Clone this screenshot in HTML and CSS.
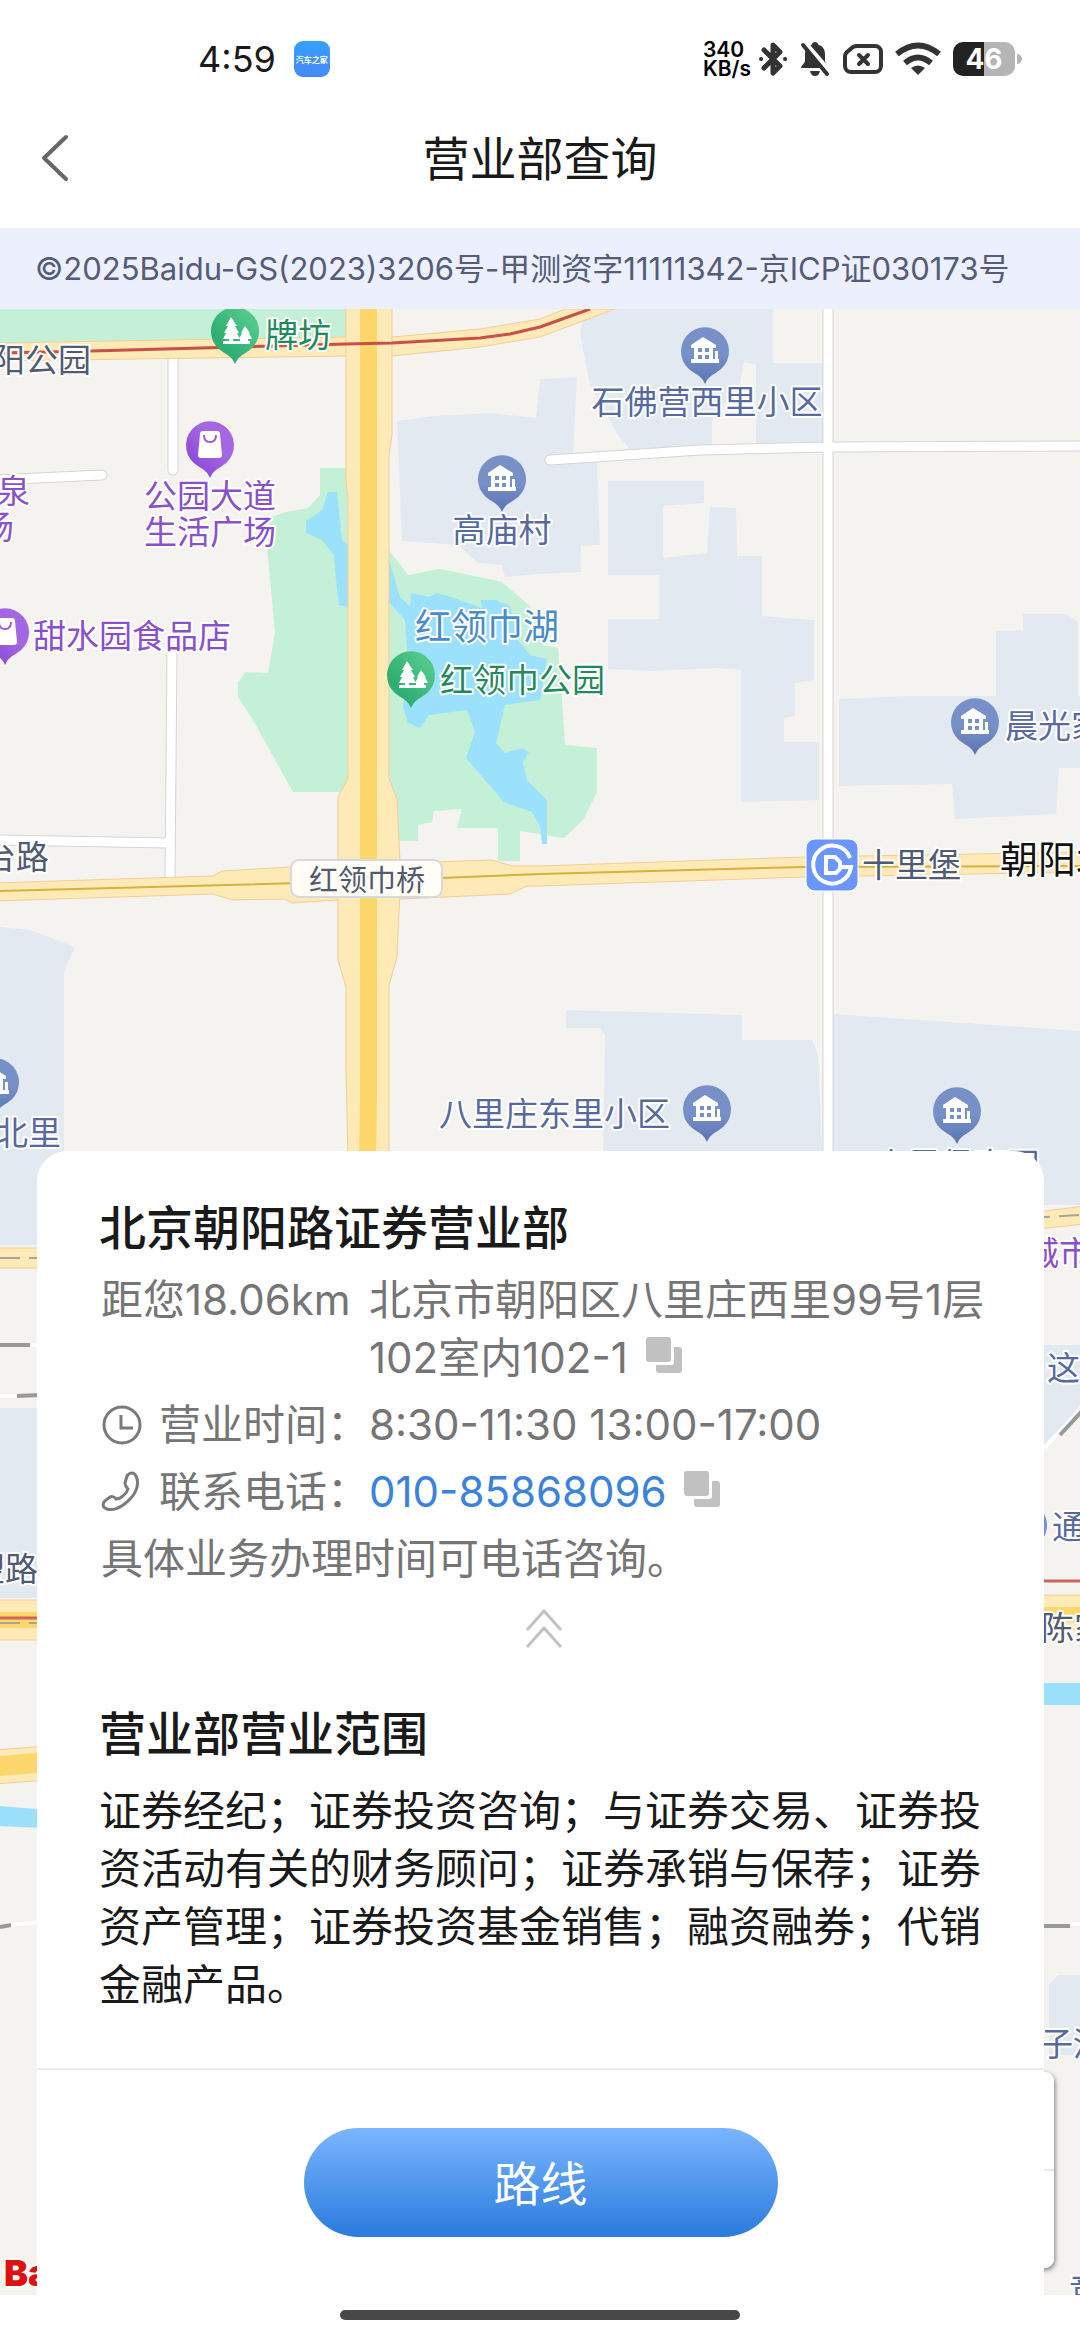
FILE: index.html
```html
<!DOCTYPE html>
<html lang="zh-CN">
<head>
  <meta charset="UTF-8">
  <meta name="viewport" content="width=device-width, initial-scale=1.0">
  <title>营业部查询</title>
  <link rel="stylesheet" href="styles.css">
</head>

<body>

  <div class="status-bar">
    <span class="time">4:59</span>
    <span class="app-icon">汽车之家</span>
    <div class="status-icons">
      <span class="speed">340<br>KB/s</span>
      <svg width="28" height="36" viewBox="0 0 28 36" fill="none" stroke="#333" stroke-width="5" stroke-linecap="round" stroke-linejoin="round">
        <path d="M5 9 L21 25 L14 32 V4 L21 11 L5 27"/>
        <path d="M2 18h.1M26 18h.1" stroke-width="4"/>
      </svg>
      <svg width="32" height="36" viewBox="0 0 32 36">
        <path d="M16 1c2 0 3 1 3 2.500c5 1.500 7 5 7 10v6c0 3 3 5 3 7.500H2c0-2.500 4-4.500 4-7.500v-6c0-5 2-8.500 7-10c0-1.500 1-2.500 3-2.500zM11 30h10q-1 5-5 5t-5-5z" fill="#333"/>
        <path d="M6 2 L31 31" stroke="#fff" stroke-width="5"/>
        <path d="M4 4 L28 33" stroke="#333" stroke-width="4" stroke-linecap="round"/>
      </svg>
      <svg width="40" height="32" viewBox="0 0 40 32" fill="none" stroke="#333" stroke-width="4">
        <path d="M14 3h18a6 6 0 0 1 6 6v14a6 6 0 0 1-6 6H8a6 6 0 0 1-6-6V13q0-2 2-4l6-5q2-1 4-1z"/>
        <path d="M16 12l9 9M25 12l-9 9" stroke-linecap="round"/>
      </svg>
      <svg width="46" height="34" viewBox="0 0 46 34" fill="none" stroke="#333" stroke-width="6">
        <path d="M2 12 Q23 -5 44 12"/>
        <path d="M10 21 Q23 10 36 21"/>
        <path d="M23 33l-7-7q7-5 14 0z" fill="#333" stroke="none"/>
      </svg>
      <span class="battery"><b>46</b></span>
    </div>
  </div>

  <header class="nav">
    <button class="back" aria-label="返回">
      <svg width="30" height="50" viewBox="0 0 30 50" fill="none" stroke="#666" stroke-width="4" stroke-linecap="round" stroke-linejoin="round"><path d="M26 4 L4 25 L26 46"/></svg>
    </button>
    <h1>营业部查询</h1>
  </header>

  <p class="notice">©2025Baidu-GS(2023)3206号-甲测资字11111342-京ICP证030173号</p>

  <main class="stage">
    <svg class="map" viewBox="0 309 1080 1986">
      <defs>
        <linearGradient id="g-blue" x2="0" y2="1"><stop offset="0.500" stop-color="#7890c8"/><stop offset="1" stop-color="#5b74b3"/></linearGradient>
        <linearGradient id="g-green" x1="1" x2="0" y2="1"><stop offset="0.200" stop-color="#50c88a"/><stop offset="0.700" stop-color="#2fae73"/></linearGradient>
        <linearGradient id="g-purple" x1="1" x2="0" y2="1"><stop offset="0.400" stop-color="#a467e2"/><stop offset="0.800" stop-color="#8c4bd8"/></linearGradient>
        <path id="drop" d="M0 33 C-3 26 -6 25 -12 21 A24 24 0 1 1 12 21 C6 25 3 26 0 33z"/>
        <g id="pin-home">
          <use href="#drop" fill="url(#g-blue)"/>
          <path d="M-2 -14 L11 -6 V-3 H8 V8 H10 V0 H13 V8 H14 V12 H-14 V8 H-11 V-3 H-14 V-6z" fill="#fff"/>
          <path d="M-7 -3h4v4h-4zM0 -3h4v4h-4zM-7 4h4v4h-4zM0 4h4v4h-4z" fill="#7890c8"/>
        </g>
        <g id="pin-park">
          <use href="#drop" fill="url(#g-green)"/>
          <path d="M-4 -14l6 9h-2l4 7h-2l3 6h-7v2h7v-2h-1l3-6h-1l4-7l5 7h-1l3 6h-4v2h2v3H-12v-3h6v-2h-6l3-6h-2l4-7h-2z" fill="#fff"/>
        </g>
        <g id="pin-shop">
          <use href="#drop" fill="url(#g-purple)"/>
          <path d="M-7 -14H7q3 0 3 3l2 21q0 3-3 3H-9q-3 0-3-3l2-21q0-3 3-3z" fill="#fff"/>
          <path d="M-6 -10q0 7 6 7t6-7" fill="none" stroke="#9a5cde" stroke-width="2"/>
        </g>
      </defs>

      <rect y="309" width="1080" height="1986" fill="#f4f3f0"/>

      <!-- residential blocks -->
      <g fill="#e3e9f1">
        <path d="M397 421L435 416L490 413L536 418L540 379L577 377L573 455L597 462L600 545L581 546V572L540 574L505 577L502 565L478 563L458 545L402 541z"/>
        <path d="M580 330L588 309H773V363H823V443H756V365L744 362L740 383L712 420V445L630 449L618 435L590 385L583 350z"/>
        <path d="M608 481H704V503L663 506V558L707 553L710 507L736 508L737 556H762V616L814 620V680L795 683V716L784 718V742H819V800L741 802V670L720 668L650 671L608 669V619H659V575H608z"/>
        <path d="M839 699L905 696H996V631L1023 630V614H1067L1078 622V696H1080V768H1059L1056 814L955 819L952 784L839 786z"/>
        <path d="M566 1010L742 1015V1040H812L818 1055L823 1170H603L605 1035L600 1028H566z"/>
        <path d="M833 1014L1080 1031V1205H833z"/>
        <path d="M0 927L30 930L75 947L64 972V1245H0z"/>
        <path d="M0 1408H60V1598H0z"/>
        <path d="M1030 1345H1080V1405L1044 1450H1030z"/>
        <path d="M1058 1975H1080V2055H1049V1984z"/>
      </g>

      <!-- parks and water -->
      <g fill="#c3f0d7">
        <path d="M0 309H346V341L0 347z"/>
        <path d="M320 468H348V792H293L253 720L238 697V682L246 672L268 673L275 633L267 547L269 518L286 512L308 508L320 495z"/>
        <path d="M389 550L408 575L440 569L484 578L502 582L530 606L543 645L558 648L562 700L565 745L597 748V792L583 820L564 838L520 831V861H498V828H457L462 809L434 811L432 822L418 825V841H389z"/>
      </g>
      <g fill="#9ce1fb">
        <path d="M328 492H337L342 540L348 545V607L339 605L336 580L334 555L322 540L306 533V521L322 510z"/>
        <path d="M389 560L400 597L410 606L411 593L429 597L436 593L451 597L482 608L481 600H496L510 606L518 640L530 655L547 659L540 700L505 705L496 743L505 753L522 748L529 752L523 762L527 780L547 800V844H542L540 826L532 812L504 802L466 758L475 732L467 710L429 715L420 728L408 723L403 707L408 665L405 620L389 602z"/>
        <path d="M0 1806L60 1811V1829L0 1826z"/>
        <path d="M1030 1683H1080V1705H1030z"/>
      </g>

      <!-- side streets -->
      <g fill="none" stroke="#d5d5d5" stroke-width="11" stroke-linecap="round">
        <path d="M173 355V470M172 650L170 880M-6 480L102 475M-6 840L170 843M828 300V1160M550 460L700 450L828 447L1090 446"/>
      </g>
      <g fill="none" stroke="#fff" stroke-width="9" stroke-linecap="round">
        <path d="M173 355V470M172 650L170 880M-6 480L102 475M-6 840L170 843M828 300V1160M550 460L700 450L828 447L1090 446"/>
      </g>

      <!-- main roads -->
      <g fill="#feeab7" stroke="#f5cd98">
        <path d="M-5 343L346 337H392L480 329L540 319L565 309H615L540 337L480 347L392 356L346 356L-5 361z"/>
        <path d="M-5 883L213 876L222 871L290 867L492 860L512 866H540L804 857L1085 852V872L804 877L540 886H527L510 894L402 899L337 900L292 903L285 899L232 900L213 894L-5 901z"/>
        <path d="M346 300H392V435L389 455V778L397 800L400 862V890L397 957L389 985V1160H348L346 1070V987L338 960V797L348 778V500L346 480z"/>
        <path d="M-5 1248H60V1268H-5z"/>
        <path d="M1020 1214L1085 1206V1224L1020 1231z"/>
        <path d="M-5 1600H60V1640H-5z"/>
        <path d="M-5 1750L60 1745V1779L-5 1784z"/>
        <path d="M1030 1595H1085V1630H1030z"/>
      </g>
      <path d="M339 868H399V896H339z" fill="#feeab7"/>
      <g fill="#fdd76b">
        <path d="M360 309H377V1100L376 1160H359L360 1100z"/>
        <path d="M0 1756L60 1751V1771L0 1776zM0 1612H60V1628H0zM1030 1607H1080V1622H1030z"/>
      </g>
      <g fill="none" stroke-width="2">
        <path d="M0 353L91 351L346 344L392 343L480 338L510 334L540 327L590 309" stroke="#c8504a" stroke-width="3"/>
        <path d="M0 891L340 882L540 874L804 867L1080 866" stroke="#d6b040"/>
        <path d="M0 1618H60M1030 1581H1080" stroke="#d0645a" stroke-width="3"/>
        <path d="M0 1258H60M0 1623H60M1030 1218L1080 1215" stroke="#aaa39a" stroke-dasharray="20 9"/>
        <path d="M1044 1448L1082 1408" stroke="#fff" stroke-width="4"/>
      </g>
      <!-- railways -->
      <g fill="none" stroke="#999" stroke-width="4">
        <path d="M0 1345H30M17 1396L40 1395M0 1927L11 1925M1044 1926H1070M1060 1435L1082 1411"/>
        <path d="M30 1345H40M0 1396H17M11 1925L40 1922M1070 1924H1080" stroke="#fff"/>
      </g>

      <!-- pins -->
      <use href="#pin-park" x="235" y="331"/>
      <use href="#pin-shop" x="210" y="445"/>
      <use href="#pin-home" x="705" y="351"/>
      <use href="#pin-home" x="502" y="479"/>
      <use href="#pin-shop" x="5" y="632"/>
      <use href="#pin-park" x="411" y="675"/>
      <use href="#pin-home" x="975" y="722"/>
      <use href="#pin-home" x="-5" y="1082"/>
      <use href="#pin-home" x="707" y="1109"/>
      <use href="#pin-home" x="957" y="1111"/>
      <use href="#pin-home" x="1023" y="1525"/>

      <!-- metro station -->
      <rect x="806" y="839" width="52" height="52" rx="9" fill="#6b96ff" stroke="#fff"/>
      <path d="M850 858A19 19 0 1 0 851 867H840" fill="none" stroke="#fff" stroke-width="4"/>
      <path d="M826 857H835L840 862V869L836 873H826z" fill="none" stroke="#fff" stroke-width="4"/>

      <!-- bridge label -->
      <rect x="291" y="860" width="151" height="37" rx="8" fill="#fffdf6" stroke="#d5d9de" stroke-width="2"/>
      <text class="bridge" x="367" y="891">红领巾桥</text>

      <g class="label road">
        <text x="91" y="372" text-anchor="end">阳公园</text>
        <text x="49" y="869" text-anchor="end">台路</text>
        <text x="862" y="877">十里堡</text>
        <text x="38" y="1581" text-anchor="end">望路</text>
        <text x="1041" y="1640">陈家</text>
      </g>
      <g class="label park">
        <text x="265" y="347">牌坊</text>
        <text x="440" y="692">红领巾公园</text>
      </g>
      <g class="label shop">
        <text x="210" y="508" text-anchor="middle">公园大道</text>
        <text x="210" y="544" text-anchor="middle">生活广场</text>
        <text x="30" y="503" text-anchor="end">泉</text>
        <text x="14" y="539" text-anchor="end">场</text>
        <text x="33" y="648">甜水园食品店</text>
        <text x="1026" y="1265">城市</text>
      </g>
      <g class="label home">
        <text x="707" y="414" text-anchor="middle">石佛营西里小区</text>
        <text x="502" y="542" text-anchor="middle">高庙村</text>
        <text x="1005" y="738">晨光家</text>
        <text x="439" y="1126">八里庄东里小区</text>
        <text x="61" y="1145" text-anchor="end">北里</text>
        <text x="957" y="1177" text-anchor="middle">十里堡南园</text>
        <text x="1047" y="1380">这</text>
        <text x="1052" y="1539">通</text>
        <text x="1040" y="2056">子河</text>
        <text x="1069" y="2302">竞</text>
      </g>
      <text class="label lake" x="415" y="640">红领巾湖</text>
      <text class="label district" x="1000" y="873">朝阳北</text>
      <text class="label baidu" x="4" y="2286">Ba</text>
    </svg>

    <div class="zoom-control"></div>

    <section class="card">
      <div class="card-body">
        <h2>北京朝阳路证券营业部</h2>
        <div class="details">
          <div class="row">
            <span>距您18.06km</span>
            <span>北京市朝阳区八里庄西里99号1层102室内102-1
              <button class="copy" aria-label="复制地址"><svg width="36" height="36" viewBox="0 0 36 36" fill="#c1c1c1"><rect width="25" height="25" rx="3"/><path d="M28 10h5a3 3 0 0 1 3 3v20a3 3 0 0 1-3 3H13a3 3 0 0 1-3-3v-5h15a3 3 0 0 0 3-3z"/></svg></button>
            </span>
          </div>
          <div class="row">
            <span class="term">
              <svg width="42" height="42" viewBox="0 0 42 42" fill="none" stroke="#7a7a7a" stroke-width="3"><circle cx="21" cy="21" r="18"/><path d="M20 11V24H32"/></svg>
              营业时间：
            </span>
            <span>8:30-11:30 13:00-17:00</span>
          </div>
          <div class="row">
            <span class="term">
              <svg width="42" height="42" viewBox="0 0 42 42" fill="none" stroke="#7a7a7a" stroke-width="3"><path d="M26 5C29 1 33 1 35 5C39 13 35 23 27 30C20 37 10 41 4 37C1 35 2 31 5 29L9 26C11 25 14 26 15 28C20 28 26 22 27 18C25 16 24 14 24 12z"/></svg>
              联系电话：
            </span>
            <span><a href="tel:010-85868096">010-85868096</a>
              <button class="copy" aria-label="复制电话"><svg width="36" height="36" viewBox="0 0 36 36" fill="#c1c1c1"><rect width="25" height="25" rx="3"/><path d="M28 10h5a3 3 0 0 1 3 3v20a3 3 0 0 1-3 3H13a3 3 0 0 1-3-3v-5h15a3 3 0 0 0 3-3z"/></svg></button>
            </span>
          </div>
          <p>具体业务办理时间可电话咨询。</p>
        </div>
        <button class="fold" aria-label="收起">
          <svg width="38" height="42" viewBox="0 0 38 42" fill="none" stroke="#c2c2c2" stroke-width="3"><path d="M2 22L19 3L36 22M2 39L19 20L36 39"/></svg>
        </button>
        <h2>营业部营业范围</h2>
        <p class="scope">证券经纪；证券投资咨询；与证券交易、证券投资活动有关的财务顾问；证券承销与保荐；证券资产管理；证券投资基金销售；融资融券；代销金融产品。</p>
      </div>
      <div class="card-foot">
        <button class="route">路线</button>
      </div>
    </section>
  </main>

  <div class="home-bar"></div>

</body>
</html>
```

FILE: styles.css
```css
* {
  box-sizing: border-box;
}

body {
  margin: 0;
  background: #fff;
  color: #1a1a1a;
  font-family: Inter, "Noto Sans CJK SC", sans-serif;
}

h1, h2, p {
  margin: 0;
}

button {
  padding: 0;
  border: 0;
  background: none;
  font-family: inherit;
  cursor: pointer;
}

svg {
  display: block;
}

/* status bar */
.status-bar {
  display: flex;
  align-items: center;
  height: 88px;
  padding: 30px 58px 0 198px;
}

.time {
  font-size: 36px;
}

.app-icon {
  display: flex;
  align-items: center;
  justify-content: center;
  width: 36px;
  height: 36px;
  margin-left: 18px;
  border-radius: 9px;
  background: linear-gradient(#35a0fb, #4687fa);
  color: #fff;
  font-size: 8px;
  font-weight: 700;
}

.status-icons {
  display: flex;
  align-items: center;
  gap: 12px;
  margin-left: auto;
}

.speed {
  margin-right: -4px;
  color: #000;
  font-size: 21px;
  font-weight: 600;
  line-height: 19px;
}

.battery {
  position: relative;
  width: 62px;
  height: 34px;
  margin-right: 7px;
  border-radius: 10px;
  background: linear-gradient(90deg, #222 50%, #b5b5b5 50%);
  color: #fff;
  font-size: 28px;
  line-height: 34px;
  text-align: center;
}

.battery::after {
  content: "";
  position: absolute;
  top: 12px;
  left: 64px;
  width: 5px;
  height: 10px;
  border-radius: 0 5px 5px 0;
  background: #b5b5b5;
}

/* header */
.nav {
  display: grid;
  grid-template-columns: 110px 1fr 110px;
  align-items: center;
  height: 140px;
}

.back {
  justify-self: start;
  padding: 20px 40px;
}

.nav h1 {
  padding-bottom: 5px;
  font-size: 47px;
  font-weight: 400;
  text-align: center;
}

.notice {
  padding: 0 35px;
  background: #ecf0fc;
  color: #555b78;
  font-size: 31px;
  line-height: 81px;
}

/* map */
.stage {
  display: grid;
  overflow: hidden;
}

.map,
.card,
.zoom-control {
  grid-area: 1 / 1;
}

.map {
  width: 100%;
  height: auto;
}

.label {
  font-size: 33px;
  stroke: #fff;
  stroke-width: 4px;
  stroke-linejoin: round;
  paint-order: stroke;
}

.road { fill: #505a70; }
.park { fill: #1f8a5c; }
.shop { fill: #8a50cc; }
.home { fill: #576aa0; }

.lake {
  fill: #4a8cc8;
  font-size: 36px;
}

.district {
  fill: #111;
  font-size: 38px;
}

.baidu {
  fill: #de1010;
  font-size: 36px;
  font-weight: 900;
}

.bridge {
  fill: #505a70;
  font-size: 29px;
  text-anchor: middle;
}

.zoom-control {
  align-self: end;
  justify-self: end;
  width: 90px;
  height: 196px;
  margin: 0 26px 27px 0;
  border-radius: 9px;
  background: linear-gradient(#fff 97px, #e8e8e8 97px, #e8e8e8 99px, #fff 99px);
  box-shadow: 1px 2px 5px rgba(0, 0, 0, .5);
}

/* branch card */
.card {
  position: relative;
  align-self: end;
  margin: 0 36px 0 37px;
  border-radius: 30px 30px 0 0;
  background: #fff;
}

.card-body {
  padding: 49px 56px 54px 62px;
}

.card h2 {
  font-size: 47px;
  font-weight: 500;
  line-height: 56px;
}

.details {
  display: grid;
  gap: 9px;
  margin-top: 15px;
  padding-left: 2px;
  color: #757575;
  font-size: 42px;
  line-height: 58px;
}

.row {
  display: grid;
  grid-template-columns: 268px 1fr;
}

.term {
  display: flex;
  align-items: center;
  gap: 16px;
  white-space: nowrap;
}

.details a {
  color: #3a82dd;
  text-decoration: none;
}

.copy {
  display: inline-block;
  margin-left: 6px;
}

.fold {
  display: block;
  margin: 20px auto 56px;
}

.scope {
  margin-top: 20px;
  font-size: 42px;
  line-height: 58px;
}

.card-foot {
  padding: 58px 0;
  border-top: 2px solid #ececec;
  text-align: center;
}

.route {
  width: 474px;
  height: 109px;
  padding-bottom: 4px;
  border-radius: 55px;
  background: linear-gradient(#7ab5ff, #2a7bdc);
  color: #fff;
  font-size: 47px;
}

.home-bar {
  width: 37%;
  height: 10px;
  margin: 15px auto 20px;
  border-radius: 5px;
  background: #484848;
}
```
